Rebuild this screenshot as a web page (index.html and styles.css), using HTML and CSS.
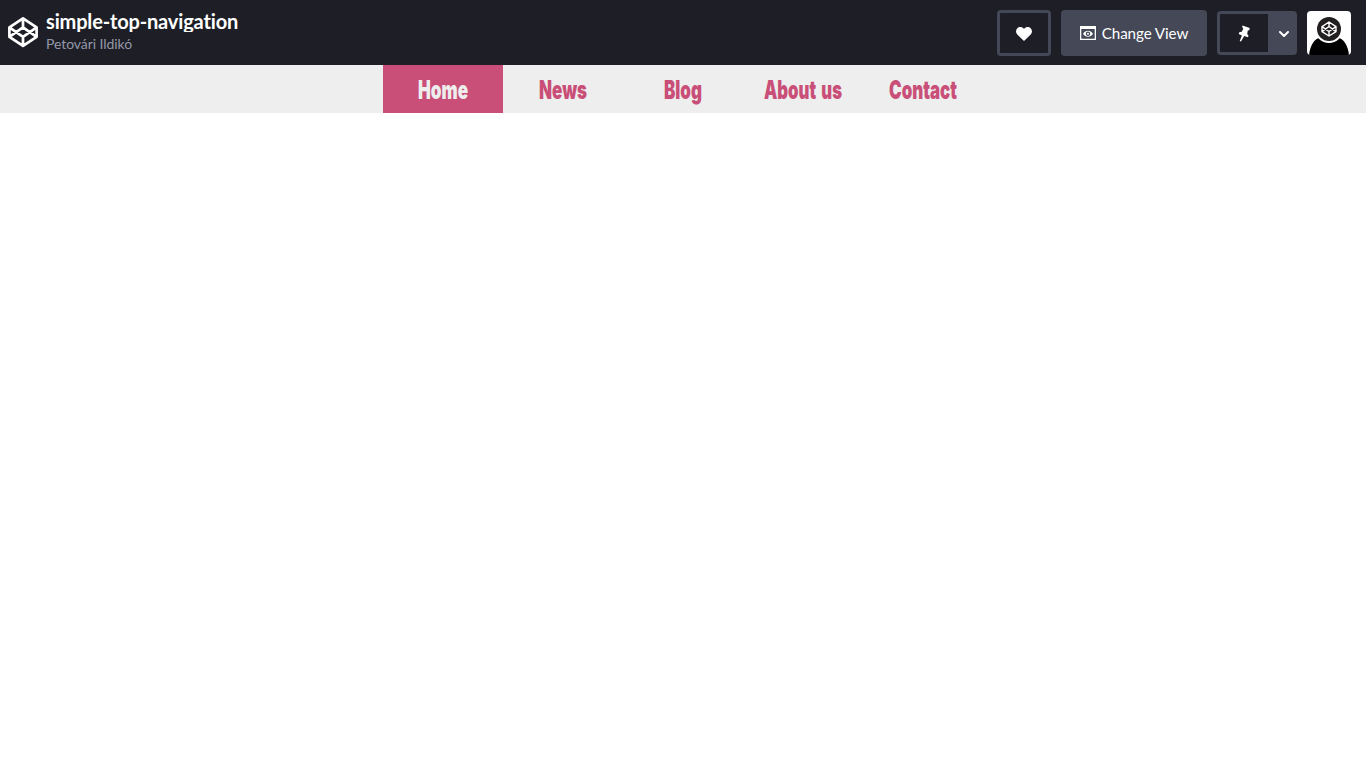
FILE: index.html
```html
<!DOCTYPE html>
<html lang="en">
<head>
<meta charset="utf-8">
<title>simple-top-navigation</title>
<link rel="stylesheet" href="styles.css">
</head>
<body>
<header class="header">
  <div class="brand">
    <svg class="logo" viewBox="0 0 30 32" fill="none" stroke="#fff" stroke-width="2.7" stroke-linejoin="round"><path d="M15 2.300 28.6 11.300v9.500L15 29.800 1.4 20.800V11.300zM15 2.300v9M15 20.800v9M1.4 11.300 15 20.800l13.6-9.500M1.4 20.800 15 11.300l13.6 9.500"/></svg>
    <div class="titles">
      <h1 class="title">simple-top-navigation</h1>
      <div class="author">Petovári Ildikó</div>
    </div>
  </div>
  <div class="actions">
    <button class="btn heart" aria-label="Love"><svg width="16" height="14" viewBox="0 0 16 14" fill="#fff"><path d="M8 14 1.3 7.5C-.4 5.7-.4 3 1.2 1.4 3-.4 6-.5 8 1.9c2-2.4 5-2.3 6.8-.5 1.6 1.6 1.6 4.3-.1 6.1z"/></svg></button>
    <button class="btn view"><svg width="16" height="14" viewBox="0 0 16 14"><path fill="#fff" fill-rule="evenodd" d="M0 0h16v14H0zM1.300 3v9.700h13.400V3z"/><path fill="#fff" fill-rule="evenodd" d="M3 7.700C5.300 3.700 10.700 3.700 13 7.700 10.700 11.700 5.300 11.700 3 7.700zM8 5.500a2.200 2.200 0 1 0 0 4.400A2.200 2.200 0 0 0 8 5.500z"/><circle cx="8" cy="7.700" r="1" fill="#fff"/></svg><span>Change View</span></button>
    <div class="split">
      <button class="pin" aria-label="Pin"><svg width="14" height="17" viewBox="0 0 14 17" fill="#fff"><path d="M5.500 .5 12.700 3 12.300 5.200l-1.500.4-.6 3.400 1.300 1.600-.5 1.600-3.800-1.200L4 16.500 2.700 16l2.200-5.500L1.700 9l.6-1.700 2.400-.5L6.300 3.800 5.200 2z"/></svg></button>
      <button class="more" aria-label="More"><svg width="10" height="6" viewBox="0 0 10 6" fill="none" stroke="#fff" stroke-width="2" stroke-linecap="round" stroke-linejoin="round"><path d="m1 1 4 4 4-4"/></svg></button>
    </div>
    <svg class="avatar" viewBox="0 0 44 44"><path fill="#fff" d="M0 0h44v44H0z"/><path d="M2 44C3 34 8 27 13 27h18c5 0 10 7 11 17z"/><circle cx="22" cy="18" r="14" fill="#fff"/><circle cx="22" cy="18" r="12" fill="#231f20"/><path fill="none" stroke="#fff" stroke-width="1.400" stroke-linejoin="round" d="m22 11 7 4.600v5L22 25l-7-4.400v-5zM22 11v4.500M22 20.500V25M15 15.600l7 4.900 7-4.900M15 20.600l7-5.100 7 5.100"/></svg>
  </div>
</header>
<nav class="nav">
  <a class="item active"><svg width="120" height="48"><text x="35" y="34" textLength="50" lengthAdjust="spacingAndGlyphs">Home</text></svg></a>
  <a class="item"><svg width="120" height="48"><text x="36" y="34" textLength="48" lengthAdjust="spacingAndGlyphs">News</text></svg></a>
  <a class="item"><svg width="120" height="48"><text x="41" y="34" textLength="38" lengthAdjust="spacingAndGlyphs">Blog</text></svg></a>
  <a class="item"><svg width="120" height="48"><text x="21" y="34" textLength="78" lengthAdjust="spacingAndGlyphs">About us</text></svg></a>
  <a class="item"><svg width="120" height="48"><text x="26" y="34" textLength="68" lengthAdjust="spacingAndGlyphs">Contact</text></svg></a>
</nav>
</body>
</html>
```

FILE: styles.css
```css
* { box-sizing: border-box; }
body { margin: 0; background: #fff; font-family: Lato, sans-serif; }
button { margin: 0; padding: 0; border: 0; font: inherit; color: #fff; display: flex; align-items: center; justify-content: center; }
svg { display: block; flex: none; }
.header { height: 65px; padding: 0 15px 0 8px; background: #1e1f26; display: flex; justify-content: space-between; }
.brand { display: flex; gap: 8px; }
.logo { width: 30px; height: 32px; margin-top: 16px; }
.titles { padding-top: 11px; }
.title { margin: 0; height: 21px; font-size: 20px; line-height: 21px; font-weight: 700; letter-spacing: -0.16px; color: #fff; overflow: hidden; }
.author { margin-top: 3px; font-size: 14px; line-height: 18px; letter-spacing: -0.07px; color: #9497a9; }
.actions { display: flex; align-items: center; gap: 10px; height: 66px; }
.btn { height: 46px; border-radius: 4px; background: #444857; }
.heart { width: 54px; border: 3px solid #444857; background: #1e1f26; }
.heart svg { margin-top: 1px; }
.view { width: 146px; gap: 6px; font-size: 15.2px; letter-spacing: -0.1px; }
.view span { margin-top: -1px; }
.split { width: 80px; height: 44px; padding: 3px 0 3px 3px; display: flex; background: #444857; border-radius: 4px; }
.pin { width: 48px; background: #1e1f26; border-radius: 1px 0 0 1px; }
.pin svg { margin-top: 1px; }
.more { flex: 1; padding: 1px 0 0 3px; background: none; }
.avatar { width: 44px; height: 44px; border-radius: 4px; }
.nav { height: 48px; padding-left: 383px; display: flex; background: #eee; }
.item { width: 120px; height: 48px; fill: #c94f78; font: 900 26px Inter, sans-serif; word-spacing: 3px; }
.item svg { overflow: visible; }
.active { background: #c94f78; fill: #eee; }
```
